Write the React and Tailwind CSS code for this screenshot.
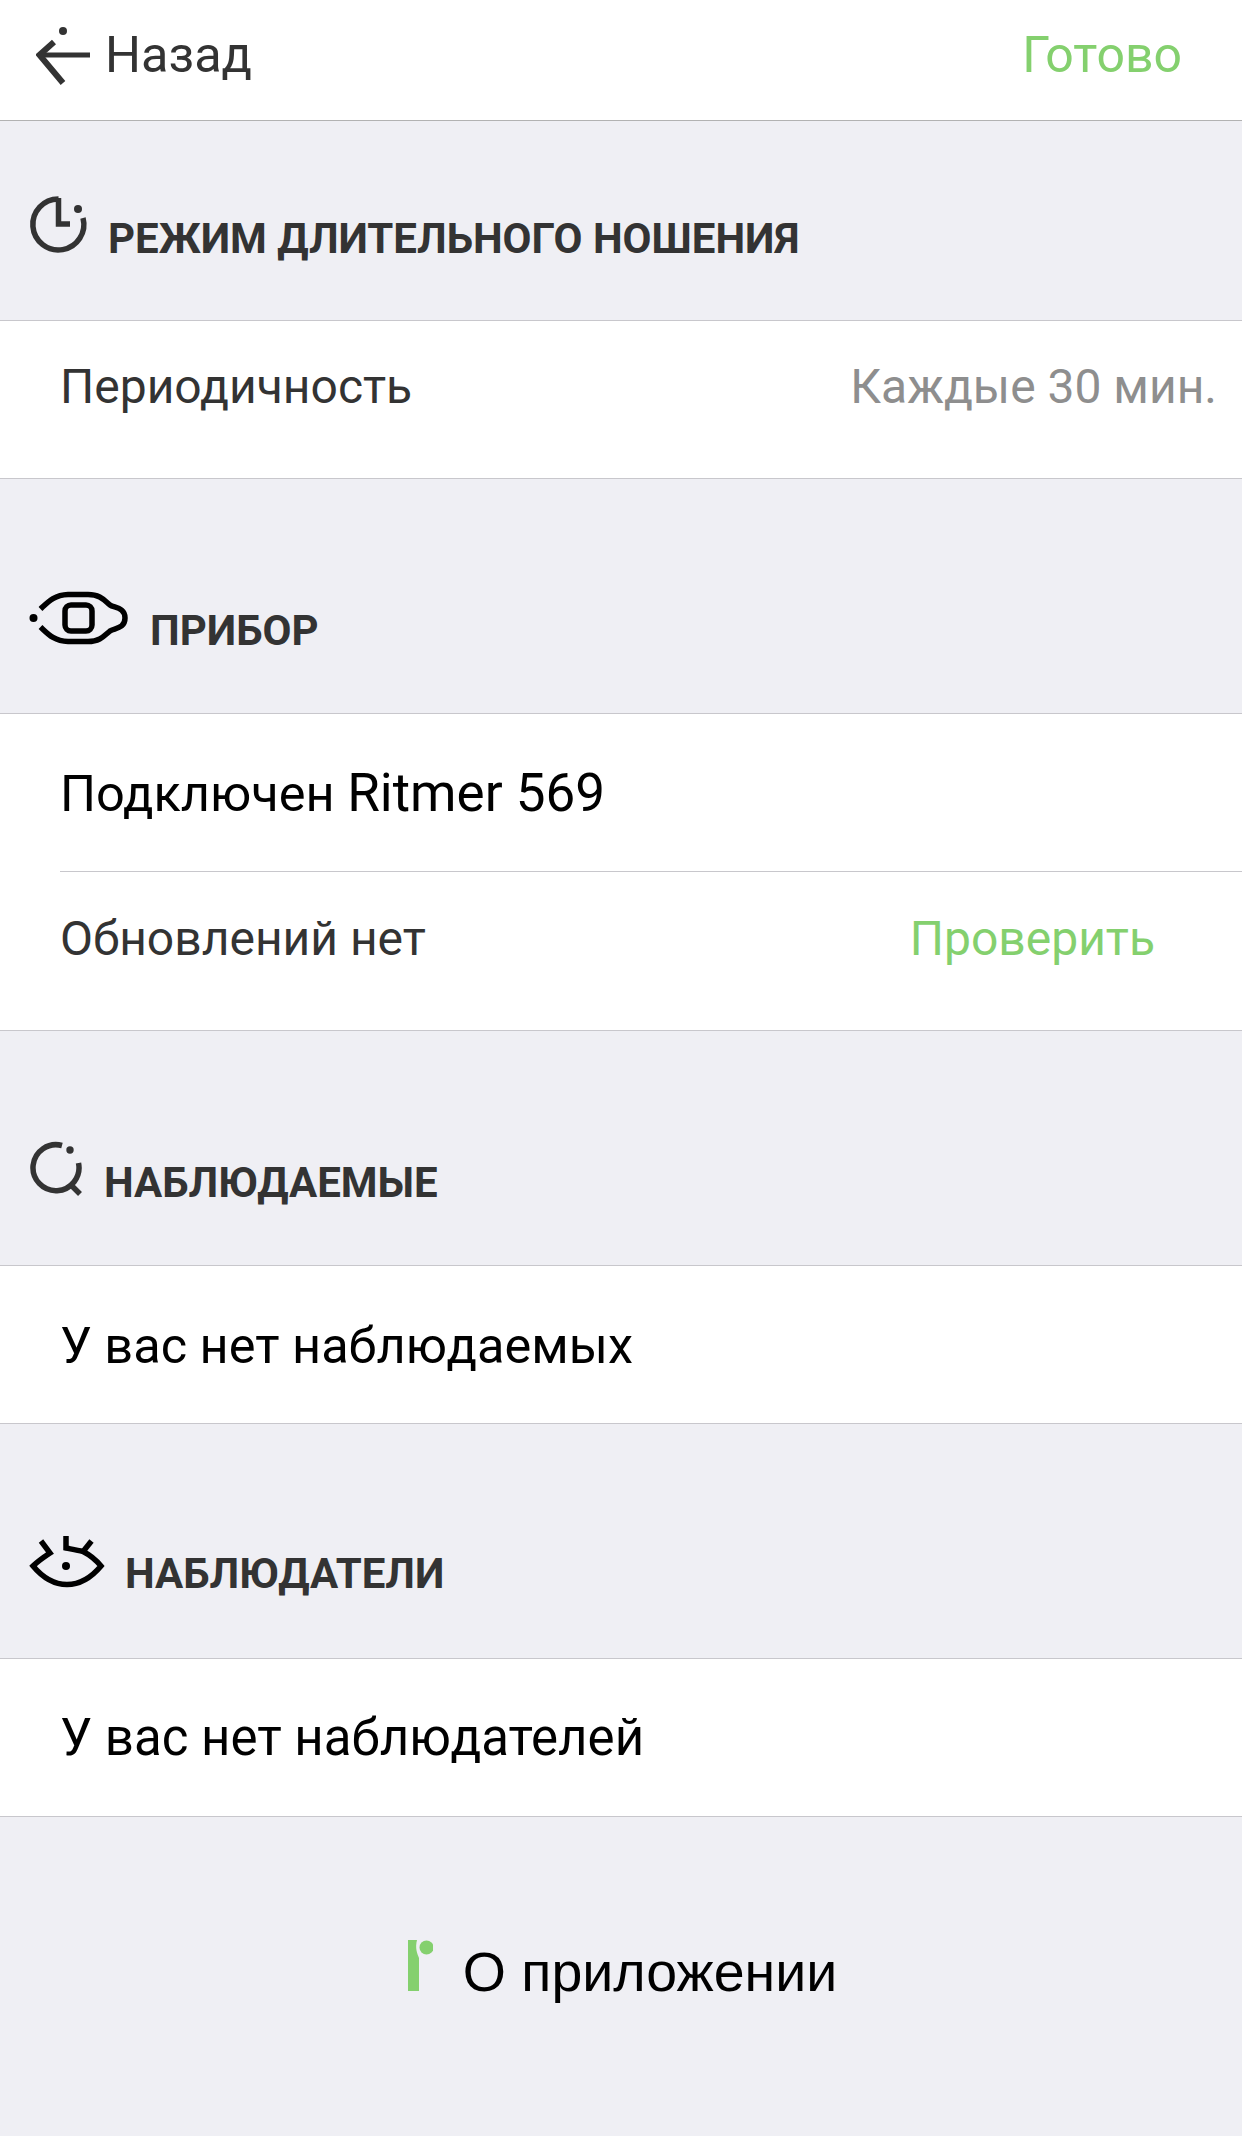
const roboto = "font-['Roboto',sans-serif]";

function ClockIcon() {
  return (
    <svg width="60" height="60" viewBox="0 0 60 60" fill="none" stroke="#333" strokeWidth="5.5" className="shrink-0">
      <path d="M29.5 3 A25.5 25.5 0 1 0 54 22" />
      <path d="M29.5 2 V28 H41" />
      <circle cx="49" cy="13" r="4" fill="#333" stroke="none" />
    </svg>
  );
}

function LensIcon() {
  return (
    <svg width="100" height="60" viewBox="29 588 100 60" fill="none" stroke="#000" strokeWidth="5.5" className="shrink-0">
      <path d="M40.5 608 C48 601 54 594 68 593.5 H88 C100 593.5 104 599 110 604 C114 607 125 606 125 617 C125 628 114 627 110 630 C104 635 100 640.5 88 640.5 H68 C54 640 48 633 40.5 626" strokeLinecap="butt" />
      <rect x="65" y="604" width="27" height="26" rx="6" />
      <circle cx="33.5" cy="617" r="4" fill="#000" stroke="none" />
    </svg>
  );
}

function WatchIcon() {
  return (
    <svg width="54" height="56" viewBox="29 1141 54 56" fill="none" stroke="#333" strokeWidth="5.5" className="shrink-0">
      <path d="M62 1145.5 A23 23 0 1 0 78.5 1163" />
      <path d="M71 1185 L80 1194" />
      <circle cx="70" cy="1150" r="3.7" fill="#333" stroke="none" />
    </svg>
  );
}

function WatcherIcon() {
  return (
    <svg width="76" height="54" viewBox="29 1536 76 54" fill="none" stroke="#000" strokeWidth="5.5" className="shrink-0">
      <path d="M41 1542 L50 1554 C44 1558 38 1562 33 1567 C43 1579 55 1585.5 67 1585.5 C79 1585.5 91 1579 101 1567 C96 1561 90 1556 83 1552.5 C77 1551 71 1550 66 1549 V1537" />
      <path d="M83.5 1552 L91.5 1542" />
      <circle cx="66" cy="1567" r="4" fill="#000" stroke="none" />
    </svg>
  );
}

function LogoIcon() {
  return (
    <svg width="26" height="52" viewBox="406 1940 26 52" className="shrink-0">
      <path d="M407 1940 H416 C414 1948 416 1953 418 1958 V1991 H407 Z" fill="#84d06e" />
      <circle cx="425.5" cy="1947.5" r="7" fill="#84d06e" />
    </svg>
  );
}

function SectionHeader({ icon, title, height, pb, gap, textShift }) {
  return (
    <div className={`flex items-end pl-[29px] ${height} ${pb} ${gap}`}>
      {icon}
      <span className={`text-[42px] leading-[42px] font-bold text-[#333] whitespace-nowrap ${textShift}`}>{title}</span>
    </div>
  );
}

function Row({ children, className }) {
  return <div className={`flex items-center justify-between pl-[60px] ${className}`}>{children}</div>;
}

export default function App() {
  return (
    <div className={`w-[1242px] h-[2136px] bg-[#efeff4] ${roboto} flex flex-col overflow-hidden`}>
      <div className="h-[121px] bg-white border-b border-[#b2b2b2] flex items-center justify-between pl-[36px] pr-[60px] pb-[11px] shrink-0">
        <div className="flex items-center gap-[13px]">
          <svg width="56" height="60" viewBox="0 0 56 60" fill="none" stroke="#333" strokeWidth="5" className="mt-[5px]">
            <path d="M3 28 H54" />
            <path d="M18 15 L3.5 28 L27 56" strokeWidth="6" />
            <circle cx="27" cy="4" r="4" fill="#333" stroke="none" />
          </svg>
          <span className="text-[50.5px] leading-[56px] text-[#333]">Назад</span>
        </div>
        <span className="text-[50px] leading-[56px] text-[#84d06e]">Готово</span>
      </div>

      <SectionHeader icon={<ClockIcon />} title="РЕЖИМ ДЛИТЕЛЬНОГО НОШЕНИЯ" height="h-[199px]" pb="pb-[64px]" gap="gap-[19px]" textShift="mb-[-4px]" />
      <div className="bg-white border-y border-[#c8c7cc] shrink-0">
        <Row className="h-[157px] pr-[25px] pb-[25px]">
          <span className="text-[48px] text-[#333]">Периодичность</span>
          <span className="text-[48px] text-[#8e8e8e]">Каждые 30 мин.</span>
        </Row>
      </div>

      <SectionHeader icon={<LensIcon />} title="ПРИБОР" height="h-[234px]" pb="pb-[64px]" gap="gap-[21px]" textShift="mb-[-3px]" />
      <div className="bg-white border-y border-[#c8c7cc] shrink-0">
        <Row className="h-[157px] pt-[2px]">
          <span className="text-[50.5px] text-black">Подключен <span className="text-[53px]">Ritmer 569</span></span>
        </Row>
        <div className="ml-[60px] h-px bg-[#c8c7cc]" />
        <Row className="h-[158px] pr-[87px] pb-[24px]">
          <span className="text-[48px] text-[#333]">Обновлений нет</span>
          <span className="text-[48px] text-[#84d06e]">Проверить</span>
        </Row>
      </div>

      <SectionHeader icon={<WatchIcon />} title="НАБЛЮДАЕМЫЕ" height="h-[234px]" pb="pb-[68px]" gap="gap-[21px]" textShift="mb-[-7px]" />
      <div className="bg-white border-y border-[#c8c7cc] shrink-0">
        <Row className="h-[157px] pt-[2px]">
          <span className="text-[50.5px] text-black">У вас нет наблюдаемых</span>
        </Row>
      </div>

      <SectionHeader icon={<WatcherIcon />} title="НАБЛЮДАТЕЛИ" height="h-[234px]" pb="pb-[69px]" gap="gap-[20px]" textShift="mb-[-6px]" />
      <div className="bg-white border-y border-[#c8c7cc] shrink-0">
        <Row className="h-[157px] pt-[2px]">
          <span className="text-[51px] text-black">У вас нет наблюдателей</span>
        </Row>
      </div>

      <div className="flex items-end justify-center gap-[30px] pt-[123px] pl-[2px]">
        <LogoIcon />
        <span className="text-[55.5px] leading-[52px] text-black mb-[-6px] font-['Liberation_Sans',sans-serif]">О приложении</span>
      </div>
    </div>
  );
}
